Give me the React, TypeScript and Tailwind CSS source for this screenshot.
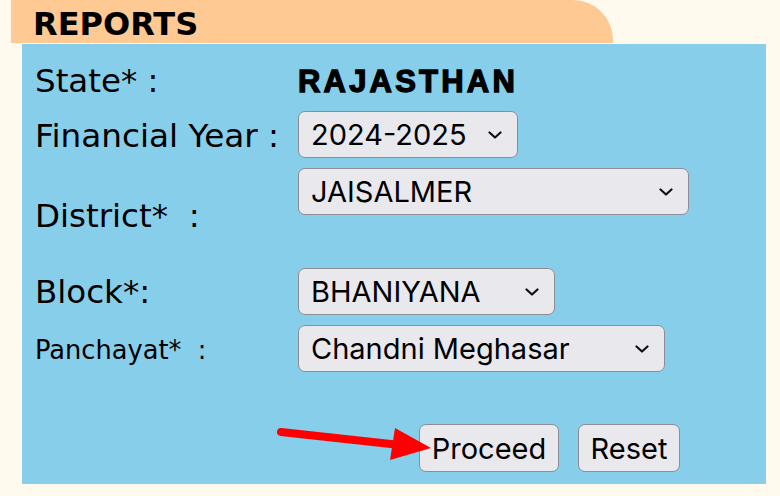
import React from "react";

const labelFont = { fontFamily: '"DejaVu Sans", Verdana, sans-serif' };

function Chevron() {
  return (
    <svg width="14" height="8" viewBox="0 0 14 8" className="shrink-0">
      <path d="M1.5 1.5 L7 6.5 L12.5 1.5" fill="none" stroke="#111" strokeWidth="2.2" strokeLinecap="round" strokeLinejoin="round" />
    </svg>
  );
}

function FakeSelect({ value, width }: { value: string; width: string }) {
  return (
    <div
      className={`${width} h-[47px] shrink-0 rounded-[7px] border-[1.5px] border-[#8e8d95] bg-[#e9e8ed] flex items-center justify-between pl-[12px] pr-[15px] text-[29px] leading-none text-black font-['Inter',sans-serif]`}
    >
      <span>{value}</span>
      <Chevron />
    </div>
  );
}

export default function App() {
  return (
    <div className="w-[780px] h-[496px] bg-[#fff9ee] overflow-hidden">
      <div className="ml-[11px] w-[602px] h-[43px] bg-[#ffc993] rounded-tr-[40px] pl-[22px] pt-[8px]">
        <div
          className="text-[32px] leading-[32px] font-bold text-black"
          style={labelFont}
        >
          REPORTS
        </div>
      </div>
      <div className="relative mt-[1px] ml-[22px] w-[744px] h-[440px] bg-[#87ceeb] pl-[13px] text-black">
        <div className="h-[67px] pt-[21px] flex items-baseline">
          <div className="w-[263px] text-[32.5px] leading-[32px]" style={labelFont}>
            State*&nbsp;:
          </div>
          <div className="text-[31px] leading-[30px] font-bold tracking-[3.2px] font-['Liberation_Sans',Arial,sans-serif] [-webkit-text-stroke:1.3px_black]">
            RAJASTHAN
          </div>
        </div>
        <div className="h-[57px] flex items-start">
          <div className="w-[263px] mt-[9px] text-[32.7px] leading-[32px]" style={labelFont}>
            Financial Year :
          </div>
          <FakeSelect value="2024-2025" width="w-[220px]" />
        </div>
        <div className="h-[100px] flex items-start">
          <div className="w-[263px] mt-[32px] text-[32.5px] leading-[32px]" style={labelFont}>
            District*&nbsp; :
          </div>
          <FakeSelect value="JAISALMER" width="w-[391px]" />
        </div>
        <div className="h-[57px] flex items-start">
          <div className="w-[263px] mt-[8px] text-[32.5px] leading-[32px]" style={labelFont}>
            Block*:
          </div>
          <FakeSelect value="BHANIYANA" width="w-[257px]" />
        </div>
        <div className="h-[99px] flex items-start">
          <div className="w-[263px] mt-[12px] text-[25.7px] leading-[26px]" style={labelFont}>
            Panchayat*&nbsp; :
          </div>
          <FakeSelect value="Chandni Meghasar" width="w-[367px]" />
        </div>
        <div className="flex items-start gap-[19px] ml-[384px]">
          <button className="w-[140px] h-[48px] rounded-[7px] border-[1.5px] border-[#8e8d95] bg-[#e9e8ed] text-[29px] leading-none text-black font-['Inter',sans-serif] flex items-center justify-center">
            Proceed
          </button>
          <button className="w-[102px] h-[48px] rounded-[7px] border-[1.5px] border-[#8e8d95] bg-[#e9e8ed] text-[29px] leading-none text-black font-['Inter',sans-serif] flex items-center justify-center">
            Reset
          </button>
        </div>
        <svg
          className="absolute left-0 top-0 pointer-events-none"
          width="744"
          height="440"
          viewBox="0 0 744 440"
        >
          <line x1="259" y1="388" x2="378" y2="401" stroke="#ff0000" strokeWidth="8" strokeLinecap="round" />
          <polygon points="373,384 368,416 409,404" fill="#ff0000" />
        </svg>
      </div>
    </div>
  );
}
